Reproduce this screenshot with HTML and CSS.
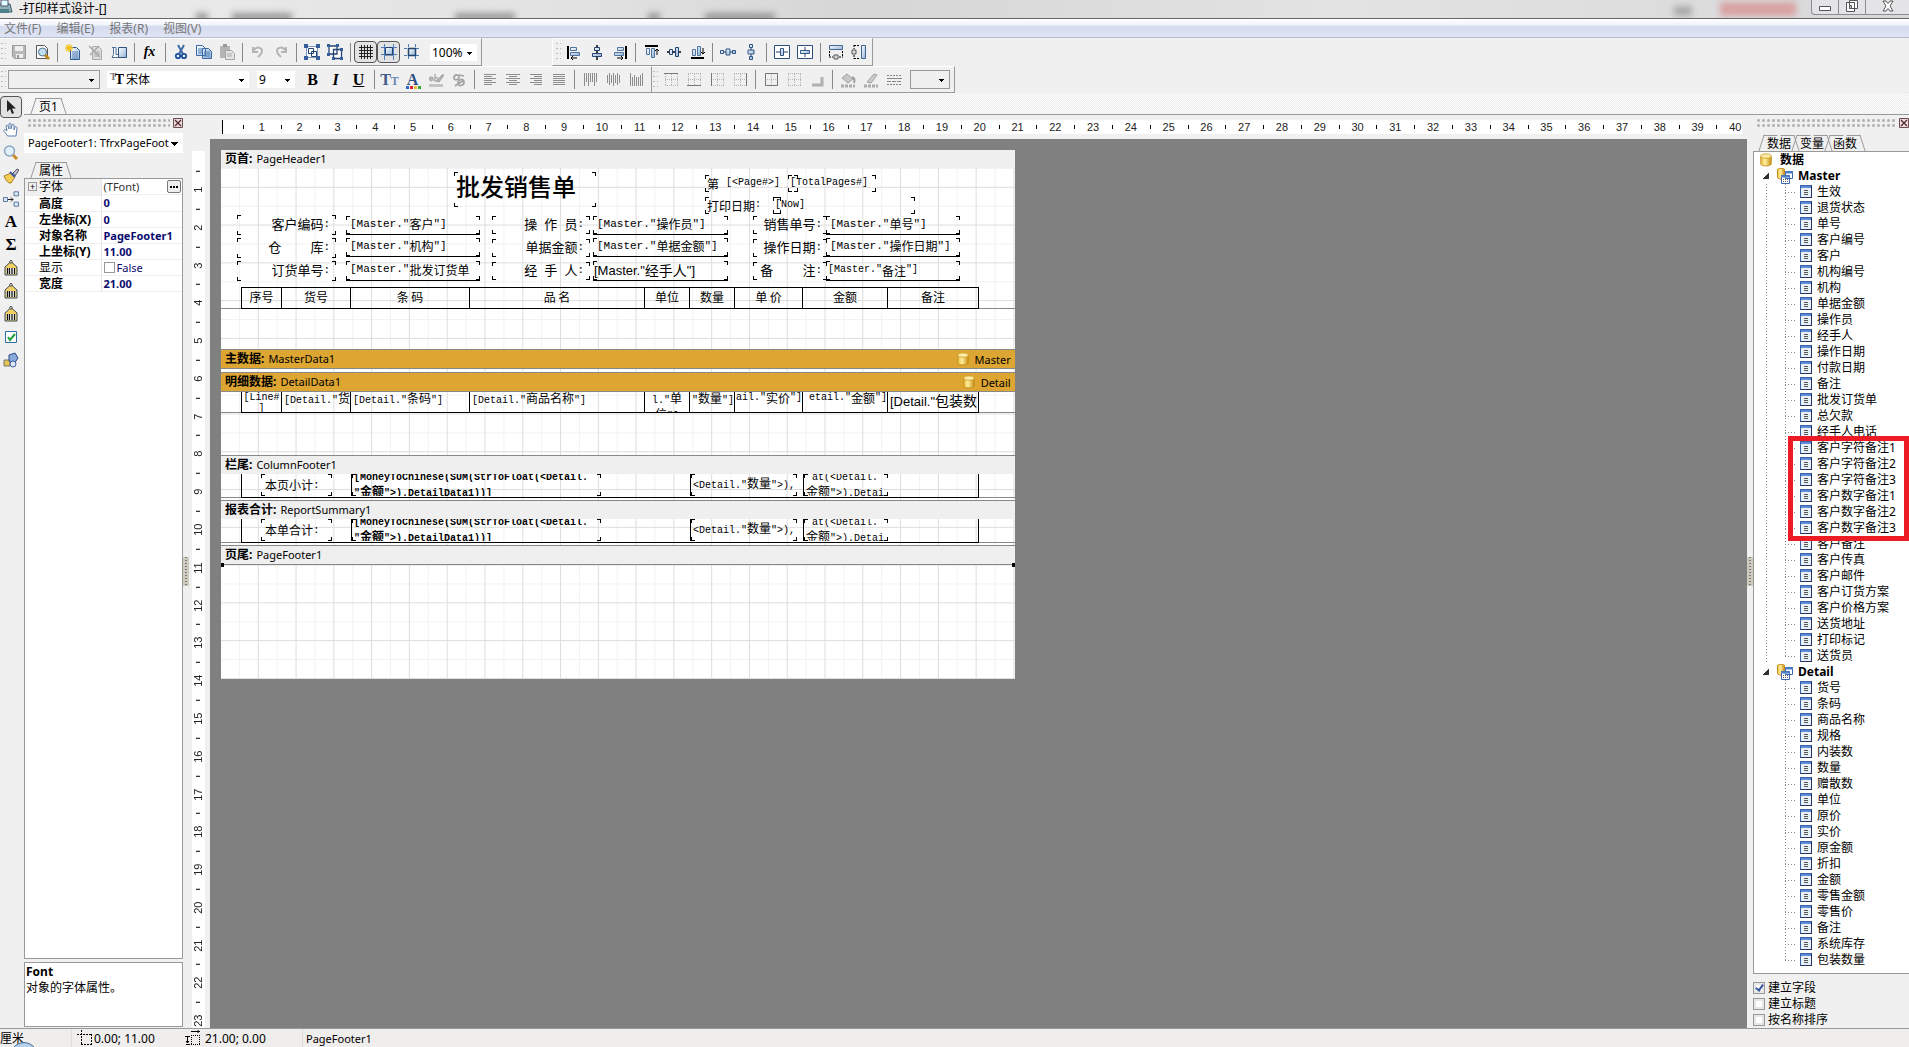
FILE: index.html
```html
<!DOCTYPE html>
<html lang="zh-CN">
<head>
<meta charset="utf-8">
<title>打印样式设计</title>
<link rel="stylesheet" href="styles.css">
</head>
<body>
<svg class="sprite" aria-hidden="true">
<defs>
<linearGradient id="blue" x1="0" y1="0" x2="1" y2="1"><stop offset="0" stop-color="#fff"/><stop offset="1" stop-color="#8fb2d8"/></linearGradient>
<linearGradient id="gold" x1="0" x2="1" y1="0" y2="0"><stop offset="0" stop-color="#e8b83a"/><stop offset=".4" stop-color="#fff0a0"/><stop offset="1" stop-color="#c98f14"/></linearGradient>
</defs>
<symbol id="save" viewBox="0 0 16 16"><path d="M1.500 1.500h13v13H3.500l-2-2z" fill="#b9b9b9" stroke="#999"/><path d="M4 2h8v5H4zM5 10h7v4H5z" fill="#eee"/><path d="M6 11h2v3H6z" fill="#999"/></symbol>
<symbol id="preview" viewBox="0 0 16 16"><path d="M2.500 1.500h8l3 3v10h-11z" fill="#fff" stroke="#555"/><circle cx="8.500" cy="8" r="4" fill="#bfe0f0" stroke="#56748c"/><path d="M11 11l4 4" stroke="#c08a20" stroke-width="3"/></symbol>
<symbol id="newpage" viewBox="0 0 16 16"><path d="M5.500 3.500h6l3 3v9h-9z" fill="url(#blue)" stroke="#2f5b93"/><path d="M7 8h6M7 10h6M7 12h6M7 14h6" stroke="#5c83b5"/><path d="M4 0v8M0 4h8M1 1l6 6M7 1L1 7" stroke="#f1c21c" stroke-width="1.300"/></symbol>
<symbol id="delpage" viewBox="0 0 16 16"><path d="M4.500 2.500h6l3 3v10h-9z" fill="#ddd" stroke="#aaa"/><path d="M6 8h6M6 10h6M6 12h6" stroke="#aaa"/><path d="M1 2l11 11M11 2L2 11" stroke="#aaa" stroke-width="1.500"/></symbol>
<symbol id="setpage" viewBox="0 0 16 16"><path d="M1 3.500h4v7h3v3H1l1.500-3V3.500z" fill="#fff" stroke="#51719a"/><path d="M7.500 3.500h8v10h-8z" fill="url(#blue)" stroke="#31507c"/></symbol>
<symbol id="cut" viewBox="0 0 16 16"><path d="M5 1l5 9M11 1L6 10" stroke="#3f6ba5" stroke-width="2"/><circle cx="5" cy="12" r="2.200" fill="none" stroke="#1c4fa0" stroke-width="1.800"/><circle cx="11" cy="12" r="2.200" fill="none" stroke="#1c4fa0" stroke-width="1.800"/></symbol>
<symbol id="copy" viewBox="0 0 16 16"><path d="M.5 1.500h6l3 3v7h-9zM6.500 4.500h6l3 3v7h-9z" fill="url(#blue)" stroke="#3a68a6"/><path d="M2 5h4M2 7h4M2 9h4M8 8h6M8 10h6M8 12h6" stroke="#4878b5"/></symbol>
<symbol id="paste" viewBox="0 0 16 16"><path d="M1 2h10v12H1z" fill="#b5b5b5"/><path d="M4 0h4v3H4z" fill="#999"/><path d="M6.500 6.500h6l3 3v6h-9z" fill="#e4e4e4" stroke="#a5a5a5"/><path d="M8 10h5M8 12h5" stroke="#aaa"/></symbol>
<symbol id="undo" viewBox="0 0 16 16"><path d="M3 3v5h5M3 7c3-5 9-4 9 0 0 3-2 4-4 6" fill="none" stroke="#b4b4b4" stroke-width="2"/></symbol>
<symbol id="redo" viewBox="0 0 16 16"><path d="M13 3v5H8M13 7c-3-5-9-4-9 0 0 3 2 4 4 6" fill="none" stroke="#b4b4b4" stroke-width="2"/></symbol>
<symbol id="group" viewBox="0 0 16 16"><path d="M2.500 2.500h11v11h-11z" fill="#f7faff" stroke="#7d97bd"/><path d="M4.500 4.500h5v5h-5zM7.500 7.500h5v5h-5z" fill="#fff" stroke="#24436e"/><path d="M0 0h4v4H0zM12 0h4v4h-4zM0 12h4v4H0zM12 12h4v4h-4z" fill="#345f9c"/></symbol>
<symbol id="ungroup" viewBox="0 0 16 16"><path d="M2 2h8v8H2zM6.500 5.500h8v9h-8z" fill="#fff" stroke="#24436e" stroke-width="1.300"/><path d="M0 0h3v3H0zM9 0h3v3H9zM0 9h3v3H0zM13 4h3v3h-3zM13 13h3v3h-3zM5 13h3v3H5z" fill="#345f9c"/></symbol>
<symbol id="grid" viewBox="0 0 16 16"><path d="M3.500 1v14M6.500 1v14M9.500 1v14M12.500 1v14M1 3.500h14M1 6.500h14M1 9.500h14M1 12.500h14" stroke="#222"/></symbol>
<symbol id="snap" viewBox="0 0 16 16"><path d="M3.500 0v16M12.500 0v16M0 3.500h16M0 10.500h16" stroke="#4d7cc0"/><path d="M4.500 3.500h7v7h-7z" fill="url(#blue)" stroke="#24436e"/><path d="M4 11h8" stroke="#24436e"/></symbol>
<symbol id="fit" viewBox="0 0 16 16"><path d="M4.500 0v16M11.500 0v16M0 4.500h16M0 11.500h16" stroke="#4d7cc0" stroke-dasharray="3 1"/><path d="M4.500 4.500h7v7h-7z" fill="url(#blue)" stroke="#24436e" stroke-width="1.500"/></symbol>
<symbol id="aleft" viewBox="0 0 16 16"><path d="M2 2v13" stroke="#000" stroke-width="2"/><path d="M4.500 3.500h6v3h-6zM4.500 8.500h9v3h-9z" fill="url(#blue)" stroke="#52749c"/><path d="M5 14h6M7 12l-2 2 2 2" stroke="#000" fill="none"/></symbol>
<symbol id="acenter" viewBox="0 0 16 16"><path d="M8 1v15" stroke="#000" stroke-width="1.500"/><path d="M5.500 3.500h5v3h-5zM3.500 9.500h9v3h-9z" fill="url(#blue)" stroke="#24436e"/></symbol>
<symbol id="aright" viewBox="0 0 16 16"><path d="M14 2v13" stroke="#000" stroke-width="2"/><path d="M5.500 3.500h6v3h-6zM2.500 8.500h9v3h-9z" fill="url(#blue)" stroke="#52749c"/><path d="M5 14h6M9 12l2 2-2 2" stroke="#000" fill="none"/></symbol>
<symbol id="atop" viewBox="0 0 16 16"><path d="M2 2h13" stroke="#000" stroke-width="2"/><path d="M3.500 4.500h3v6h-3zM8.500 4.500h3v9h-3z" fill="url(#blue)" stroke="#52749c"/><path d="M14 5v6M12 7l2-2 2 2" stroke="#000" fill="none"/></symbol>
<symbol id="amid" viewBox="0 0 16 16"><path d="M1 8h14" stroke="#000" stroke-width="1.500"/><path d="M3.500 5.500h3v5h-3zM9.500 3.500h3v9h-3z" fill="url(#blue)" stroke="#24436e"/></symbol>
<symbol id="abottom" viewBox="0 0 16 16"><path d="M2 14h13" stroke="#000" stroke-width="2"/><path d="M3.500 5.500h3v6h-3zM8.500 2.500h3v9h-3z" fill="url(#blue)" stroke="#52749c"/><path d="M14 4v6M12 8l2 2 2-2" stroke="#000" fill="none"/></symbol>
<symbol id="hspace" viewBox="0 0 16 16"><path d="M0 8h16" stroke="#24436e"/><path d="M.5 6.500h3v3h-3zM6 5h4v6H6zM12.500 6.500h3v3h-3z" fill="url(#blue)" stroke="#2f5483"/></symbol>
<symbol id="vspace" viewBox="0 0 16 16"><path d="M8 0v16" stroke="#24436e"/><path d="M6.500 .5h3v3h-3zM5 6h6v4H5zM6.500 12.500h3v3h-3z" fill="url(#blue)" stroke="#2f5483"/></symbol>
<symbol id="ch" viewBox="0 0 16 16"><path d="M.5 1.500h15v13H.5z" fill="#fff" stroke="#2f4f79"/><path d="M2 8h12" stroke="#24436e"/><path d="M6.500 4.500h3v7h-3z" fill="url(#blue)" stroke="#2f5483"/></symbol>
<symbol id="cv" viewBox="0 0 16 16"><path d="M.5 1.500h15v13H.5z" fill="#fff" stroke="#2f4f79"/><path d="M8 3v10" stroke="#24436e"/><path d="M3.500 6.500h9v3h-9z" fill="url(#blue)" stroke="#2f5483"/></symbol>
<symbol id="samew" viewBox="0 0 16 16"><path d="M1.500 1.500h13v4h-13z" fill="url(#blue)" stroke="#44658f"/><path d="M1.500 7v6M14.500 7v6M1 13h4M11 13h4" stroke="#000" stroke-dasharray="2 1"/><path d="M6 11h4v4H6z" fill="#ddd" stroke="#555"/></symbol>
<symbol id="sameh" viewBox="0 0 16 16"><path d="M10.500 1.500h4v13h-4z" fill="url(#blue)" stroke="#44658f"/><path d="M3 1.500h6M3 14.500h6M3 1v4M3 11v4" stroke="#000" stroke-dasharray="2 1"/><path d="M1 6h4v4H1z" fill="#ddd" stroke="#555"/></symbol>
<symbol id="marker" viewBox="0 0 16 16"><path d="M1 12h14v3H1z" fill="#c4c4c4"/><path d="M9 9l5-6h2l-5 7z" fill="#bbb" stroke="#999"/><path d="M2 8c-2-4 3-4 3-1v2M5 7c-3-1-4 2-1 2M7 2v7c4 1 4-5 0-3" fill="none" stroke="#aaa" stroke-width="1.400"/></symbol>
<symbol id="rotate" viewBox="0 0 16 16"><path d="M3 6c0-4 5-4 5-1S3 9 3 6M8 3l5 1M7 11c0-4 6-5 6-1s-6 5-6 1M13 8l-9 6" fill="none" stroke="#a2a2a2" stroke-width="1.700"/></symbol>
<symbol id="tl" viewBox="0 0 16 16"><path d="M2 2.500h12M2 4.500h8M2 6.500h12M2 8.500h8M2 10.500h12M2 12.500h8" stroke="#8d8d8d"/></symbol>
<symbol id="tc" viewBox="0 0 16 16"><path d="M1 2.500h14M4 4.500h8M1 6.500h14M4 8.500h8M1 10.500h14M4 12.500h8" stroke="#8d8d8d"/></symbol>
<symbol id="tr" viewBox="0 0 16 16"><path d="M2 2.500h12M6 4.500h8M2 6.500h12M6 8.500h8M2 10.500h12M6 12.500h8" stroke="#8d8d8d"/></symbol>
<symbol id="tj" viewBox="0 0 16 16"><path d="M2 2.500h12M2 4.500h12M2 6.500h12M2 8.500h12M2 10.500h12M2 12.500h12" stroke="#8d8d8d"/></symbol>
<symbol id="vt" viewBox="0 0 16 16"><path d="M2.500 1v13M4.500 1v9M6.500 1v13M8.500 1v9M10.500 1v9M12.500 1v13M14.500 1v9" stroke="#8d8d8d"/></symbol>
<symbol id="vm" viewBox="0 0 16 16"><path d="M2.500 3v8M4.500 1v12M6.500 3v8M8.500 1v13M10.500 3v8M12.500 1v12M14.500 3v8" stroke="#8d8d8d"/></symbol>
<symbol id="vb" viewBox="0 0 16 16"><path d="M2.500 1v13M4.500 5v9M6.500 3v11M8.500 5v9M10.500 5v9M12.500 3v11M14.500 1v13" stroke="#8d8d8d"/></symbol>
<symbol id="dots" viewBox="0 0 16 16"><path d="M2 1.500h13M2 7.500h13M2 13.500h13M2.500 2v12M8.500 2v12M14.500 2v12" stroke="#b5b5b5" stroke-dasharray="1 1"/></symbol>
<symbol id="ft" viewBox="0 0 16 16"><use href="#dots"/><path d="M1 1.500h14" stroke="#777"/></symbol>
<symbol id="fb" viewBox="0 0 16 16"><use href="#dots"/><path d="M1 13.500h14" stroke="#777"/></symbol>
<symbol id="fl" viewBox="0 0 16 16"><use href="#dots"/><path d="M2.500 1v13" stroke="#777"/></symbol>
<symbol id="fr" viewBox="0 0 16 16"><use href="#dots"/><path d="M14.500 1v13" stroke="#777"/></symbol>
<symbol id="fall" viewBox="0 0 16 16"><use href="#dots"/><path d="M2.500 1.500h12v12h-12z" fill="none" stroke="#777"/></symbol>
<symbol id="shadow" viewBox="0 0 16 16"><path d="M3 13h10V5" stroke="#b0b0b0" stroke-width="3" fill="none"/></symbol>
<symbol id="fill" viewBox="0 0 16 16"><path d="M2 6l5-4 6 5-5 4z" fill="#c8c8c8" stroke="#a0a0a0"/><path d="M12 5c3 1 3 3 2 6" stroke="#a0a0a0" stroke-width="2" fill="none"/><path d="M1 14h14" stroke="#aaa" stroke-width="3" stroke-dasharray="3 1"/></symbol>
<symbol id="pen" viewBox="0 0 16 16"><path d="M4 10l7-8 3 1-6 8z" fill="#ccc" stroke="#a0a0a0"/><path d="M1 14h14" stroke="#aaa" stroke-width="3" stroke-dasharray="3 1"/></symbol>
<symbol id="lines" viewBox="0 0 16 16"><path d="M1 3.500h15M1 12.500h15" stroke="#888" stroke-dasharray="2 1"/><path d="M1 6.500h15" stroke="#888"/><path d="M1 9.500h15" stroke="#888" stroke-dasharray="4 1"/></symbol>
<symbol id="colors" viewBox="0 0 16 16"><path d="M1 13h3v3H1z" fill="#36c"/><path d="M5 13h3v3H5z" fill="#d23"/><path d="M9 13h3v3H9z" fill="#eb3"/><path d="M13 13h3v3h-3z" fill="#3a3"/></symbol>
<symbol id="arrow" viewBox="0 0 16 16"><path d="M4 1v12l3-3 2 5 2-1-2-4.500h4z" fill="#222"/></symbol>
<symbol id="hand" viewBox="0 0 16 16"><path d="M4.500 14C3 11 0 9 1 8s2 0 3 1L3 4c0-1 2-1 2 0l1 3V2c0-1 2-1 2 0v5l1-4c0-1 2-1 2 0v5l1-3c1-1 2 0 2 1l-1 8z" fill="#fff" stroke="#5f7fae"/></symbol>
<symbol id="lens" viewBox="0 0 16 16"><path d="M10 10l4 4" stroke="#c98b28" stroke-width="3"/><circle cx="6.500" cy="6" r="5" fill="#dff0fa" stroke="#8aa3bb" stroke-width="1.400"/></symbol>
<symbol id="brush" viewBox="0 0 16 16"><path d="M10 5l4-4 2 1-4 6z" fill="#b9bfd0" stroke="#556"/><path d="M1 8l7-3 4 4-4 6H6l-3-3z" fill="#f4cd55" stroke="#a5812c"/><path d="M7 4l5 5" stroke="#3d5ba5" stroke-width="2"/></symbol>
<symbol id="conn" viewBox="0 0 16 16"><path d="M.5 6.500h4v4h-4zM11 .8h4.500v4H11zM11 11.200h4.500v4H11z" fill="#dce8f6" stroke="#5d7ba3"/><path d="M5 8.500h5M8 6.500l2 2-2 2" stroke="#222" fill="none"/></symbol>
<symbol id="bell" viewBox="0 0 16 16"><path d="M8 1.500l6 5.500v8H2V7z" fill="#f0cf63" stroke="#3a4a5e"/><path d="M3.500 8h9v6h-9z" fill="#fff"/><path d="M4.500 8v6M6.500 8v6M9 8v6M11.500 8v6" stroke="#111" stroke-width="1.300"/><circle cx="8" cy="1.800" r="1.300" fill="#fff" stroke="#444"/></symbol>
<symbol id="check" viewBox="0 0 16 16"><path d="M2.500 2.500h11v11h-11z" fill="#fff" stroke="#2d70a5"/><path d="M5 8l2 3 5-6" stroke="#25a13c" stroke-width="2" fill="none"/></symbol>
<symbol id="shapes" viewBox="0 0 16 16"><path d="M1 8h6v6H1z" fill="#e5c34f" stroke="#777"/><path d="M6 3l6-2 3 5-4 6-5-3z" fill="#8aa9d8" stroke="#2d4a88"/><circle cx="10" cy="12" r="3" fill="#dfe7f6" stroke="#3f5fa5"/></symbol>
<symbol id="db" viewBox="0 0 16 16"><path d="M2 3.500v9c0 3 12 3 12 0v-9" fill="url(#gold)" stroke="#c58d1c"/><ellipse cx="8" cy="3.500" rx="6" ry="2.500" fill="#fbe9a6" stroke="#d3a12c"/></symbol>
<symbol id="dbset" viewBox="0 0 16 16"><path d="M.5 1.500v8c0 2 7 2 7 0v-8c0-1.500-7-1.500-7 0z" fill="url(#gold)" stroke="#c58d1c"/><path d="M8.500 3.500h7v7h-7zM4.500 7.500h8v8h-8z" fill="#fff" stroke="#3d67ab"/><path d="M8 4.500h8M4 8.500h9" stroke="#4c7fd0" stroke-width="2"/><path d="M6 11.500h5M6 13.500h5" stroke="#555" stroke-dasharray="1 1"/></symbol>
<symbol id="closex" viewBox="0 0 10 10"><path d="M.5 .5h9v9h-9z" fill="#e9dede" stroke="#6f4a50"/><path d="M2 2l6 6M8 2L2 8" stroke="#5a2a33" stroke-width="1.400"/></symbol>
<symbol id="pos" viewBox="0 0 16 16"><path d="M0 4.500h14M4.500 0v14M14.500 4v10M4 14.500h11" stroke="#000" stroke-dasharray="2 1"/></symbol>
<symbol id="size" viewBox="0 0 16 16"><path d="M6 5.500h9M6.500 5v10M14.500 5v10M6 14.500h9" stroke="#000" stroke-dasharray="1 1"/><path d="M6 1.500h9M13 0v3M1 14.500h4M2.500 6v7M0 6.500h5M1 11l1.500 2L4 11" stroke="#000" fill="none"/></symbol>
</svg>

<header class="titlebar">
  <i class="haze haze-a"></i><i class="haze haze-b"></i><i class="haze haze-c"></i><i class="haze haze-d"></i><i class="haze haze-e"></i><i class="haze haze-f"></i><i class="haze haze-red"></i>
  <svg class="app-icon" viewBox="0 0 16 16"><path d="M1 4h12l2 8H1z" fill="#8fb0b4" stroke="#3d5a66"/><path d="M4 0h7v6H4z" fill="#dff" stroke="#557"/><path d="M2 9h10v4H2z" fill="#4c7f8a"/></svg>
  <h1>-打印样式设计-[]</h1>
  <div class="winbuttons">
    <button type="button" aria-label="最小化"><svg viewBox="0 0 12 12"><path d="M.5 6.500h11v4H.5z" fill="#fff" stroke="#555"/></svg></button>
    <button type="button" aria-label="还原"><svg viewBox="0 0 12 12"><path d="M3.500.5h8v8h-8zM.5 2.500h8v9h-8z" fill="#fff" stroke="#555"/><path d="M3.500 5.500h2v3h-2z" fill="#ccc" stroke="#555"/></svg></button>
    <button type="button" class="wide" aria-label="关闭"><svg viewBox="0 0 12 12"><path d="M1 1h3l2 2.500L8 1h3L8 6l3 5H8L6 8.500 4 11H1l3-5z" fill="#fff" stroke="#555"/></svg></button>
  </div>
</header>
<nav class="menubar">
  <button type="button">文件(F)</button><button type="button">编辑(E)</button><button type="button">报表(R)</button><button type="button">视图(V)</button>
</nav>
<div class="toolrow">
  <div class="toolbar">
    <i class="grip"></i>
    <button type="button" aria-label="保存"><svg><use href="#save"/></svg></button>
    <button type="button" aria-label="预览"><svg><use href="#preview"/></svg></button><i class="sep"></i>
    <button type="button" aria-label="新建页"><svg><use href="#newpage"/></svg></button>
    <button type="button" aria-label="删除页"><svg><use href="#delpage"/></svg></button>
    <button type="button" aria-label="页面设置"><svg><use href="#setpage"/></svg></button><i class="sep"></i>
    <button type="button" class="glyph fx">fx</button><i class="sep"></i>
    <button type="button" aria-label="剪切"><svg><use href="#cut"/></svg></button>
    <button type="button" aria-label="复制"><svg><use href="#copy"/></svg></button>
    <button type="button" aria-label="粘贴"><svg><use href="#paste"/></svg></button><i class="sep"></i>
    <button type="button" aria-label="撤消"><svg><use href="#undo"/></svg></button>
    <button type="button" aria-label="重做"><svg><use href="#redo"/></svg></button><i class="sep"></i>
    <button type="button" aria-label="组合"><svg><use href="#group"/></svg></button>
    <button type="button" aria-label="取消组合"><svg><use href="#ungroup"/></svg></button><i class="sep"></i>
    <button type="button" class="on" aria-label="网格"><svg><use href="#grid"/></svg></button>
    <button type="button" class="on" aria-label="对齐网格"><svg><use href="#snap"/></svg></button>
    <button type="button" aria-label="适应网格"><svg><use href="#fit"/></svg></button>
    <select class="combo zoom" aria-label="缩放"><option>100%</option></select>
  </div>
  <div class="toolbar second">
    <i class="grip"></i>
    <button type="button" aria-label="左对齐"><svg><use href="#aleft"/></svg></button>
    <button type="button" aria-label="水平居中"><svg><use href="#acenter"/></svg></button>
    <button type="button" aria-label="右对齐"><svg><use href="#aright"/></svg></button><i class="sep"></i>
    <button type="button" aria-label="顶对齐"><svg><use href="#atop"/></svg></button>
    <button type="button" aria-label="垂直居中"><svg><use href="#amid"/></svg></button>
    <button type="button" aria-label="底对齐"><svg><use href="#abottom"/></svg></button><i class="sep"></i>
    <button type="button" aria-label="水平等距"><svg><use href="#hspace"/></svg></button>
    <button type="button" aria-label="垂直等距"><svg><use href="#vspace"/></svg></button><i class="sep"></i>
    <button type="button" aria-label="区域内水平居中"><svg><use href="#ch"/></svg></button>
    <button type="button" aria-label="区域内垂直居中"><svg><use href="#cv"/></svg></button><i class="sep"></i>
    <button type="button" aria-label="等宽"><svg><use href="#samew"/></svg></button>
    <button type="button" aria-label="等高"><svg><use href="#sameh"/></svg></button>
  </div>
</div>
<div class="toolrow">
  <div class="toolbar">
    <i class="grip"></i>
    <select class="combo style" aria-label="样式" disabled><option></option></select>
    <label class="fontbox"><span class="tt"><i>T</i>T</span><select class="combo font" aria-label="字体"><option>宋体</option></select></label>
    <select class="combo size" aria-label="字号"><option>9</option></select>
    <button type="button" class="glyph">B</button>
    <button type="button" class="glyph it">I</button>
    <button type="button" class="glyph ul">U</button><i class="sep"></i>
    <button type="button" class="glyph blue">T<small>T</small></button>
    <button type="button" class="glyph color">A<svg><use href="#colors"/></svg></button>
    <button type="button" aria-label="突出显示"><svg><use href="#marker"/></svg></button>
    <button type="button" aria-label="旋转"><svg><use href="#rotate"/></svg></button><i class="sep"></i>
    <button type="button" aria-label="文字左对齐"><svg><use href="#tl"/></svg></button>
    <button type="button" aria-label="文字居中"><svg><use href="#tc"/></svg></button>
    <button type="button" aria-label="文字右对齐"><svg><use href="#tr"/></svg></button>
    <button type="button" aria-label="两端对齐"><svg><use href="#tj"/></svg></button><i class="sep"></i>
    <button type="button" aria-label="文字靠上"><svg><use href="#vt"/></svg></button>
    <button type="button" aria-label="文字居中(垂直)"><svg><use href="#vm"/></svg></button>
    <button type="button" aria-label="文字靠下"><svg><use href="#vb"/></svg></button>
  </div>
  <div class="toolbar">
    <i class="grip"></i>
    <button type="button" aria-label="上框线"><svg><use href="#ft"/></svg></button>
    <button type="button" aria-label="下框线"><svg><use href="#fb"/></svg></button>
    <button type="button" aria-label="左框线"><svg><use href="#fl"/></svg></button>
    <button type="button" aria-label="右框线"><svg><use href="#fr"/></svg></button><i class="sep"></i>
    <button type="button" aria-label="全部框线"><svg><use href="#fall"/></svg></button>
    <button type="button" aria-label="无框线"><svg><use href="#dots"/></svg></button>
    <button type="button" aria-label="阴影"><svg><use href="#shadow"/></svg></button><i class="sep"></i>
    <button type="button" aria-label="填充色"><svg><use href="#fill"/></svg></button>
    <button type="button" aria-label="线条色"><svg><use href="#pen"/></svg></button>
    <button type="button" aria-label="线型"><svg><use href="#lines"/></svg></button>
    <select class="combo width" aria-label="线宽" disabled><option></option></select>
  </div>
</div>

<main>
  <div class="objects">
    <button type="button" class="on" aria-label="选择"><svg><use href="#arrow"/></svg></button>
    <button type="button" aria-label="抓手"><svg><use href="#hand"/></svg></button>
    <button type="button" aria-label="放大"><svg><use href="#lens"/></svg></button>
    <button type="button" aria-label="格式刷"><svg><use href="#brush"/></svg></button>
    <button type="button" aria-label="插入带区"><svg><use href="#conn"/></svg></button>
    <button type="button" class="glyph">A</button>
    <button type="button" class="glyph">Σ</button>
    <button type="button" aria-label="条形码"><svg><use href="#bell"/></svg></button>
    <button type="button" aria-label="条形码 2"><svg><use href="#bell"/></svg></button>
    <button type="button" aria-label="条形码 3"><svg><use href="#bell"/></svg></button>
    <button type="button" aria-label="复选框"><svg><use href="#check"/></svg></button>
    <button type="button" aria-label="图形"><svg><use href="#shapes"/></svg></button>
  </div>
  <div class="desk">
    <div class="pagetabs"><button type="button" class="tab">页1</button></div>
    <div class="work">
      <aside class="inspector">
        <div class="dock"><i></i><button type="button" aria-label="关闭"><svg><use href="#closex"/></svg></button></div>
        <select class="combo object" aria-label="对象"><option>PageFooter1: TfrxPageFoot</option></select>
        <div class="tabs"><button type="button" class="tab">属性</button></div>
        <div class="props">
          <table>
            <tr class="cur"><th scope="row"><span class="plus">+</span>字体</th><td>(TFont)<button type="button" class="dotsbtn" aria-label="编辑字体"><svg viewBox="0 0 8 2"><path d="M0 0h2v2H0zM3 0h2v2H3zM6 0h2v2H6z"/></svg></button></td></tr>
            <tr><th scope="row">高度</th><td>0</td></tr>
            <tr><th scope="row">左坐标(X)</th><td>0</td></tr>
            <tr><th scope="row">对象名称</th><td>PageFooter1</td></tr>
            <tr><th scope="row">上坐标(Y)</th><td>11.00</td></tr>
            <tr class="plain"><th scope="row">显示</th><td><label><input type="checkbox">False</label></td></tr>
            <tr><th scope="row">宽度</th><td>21.00</td></tr>
          </table>
        </div>
        <div class="help"><b>Font</b><p>对象的字体属性。</p></div>
      </aside>
      <div class="split left"><i></i></div>
      <section class="designer">
        <ol class="ruler hor"><li>1<li>2<li>3<li>4<li>5<li>6<li>7<li>8<li>9<li>10<li>11<li>12<li>13<li>14<li>15<li>16<li>17<li>18<li>19<li>20<li>21<li>22<li>23<li>24<li>25<li>26<li>27<li>28<li>29<li>30<li>31<li>32<li>33<li>34<li>35<li>36<li>37<li>38<li>39<li>40</ol>
        <div class="lower">
          <ol class="ruler ver"><li>1<li>2<li>3<li>4<li>5<li>6<li>7<li>8<li>9<li>10<li>11<li>12<li>13<li>14<li>15<li>16<li>17<li>18<li>19<li>20<li>21<li>22<li>23</ol>
          <div class="canvas">
            <div class="page">
              <section class="band header">
                <h2><b>页首:</b> PageHeader1</h2>
                <div class="body">
                  <span class="memo title" style="left:233px;top:4px;width:142px;height:35px">批发销售单</span>
                  <span class="memo small" style="left:484px;top:7px;width:93px;height:17px"><em>第</em><i class="half"></i>[&lt;Page#&gt;]</span>
                  <span class="memo small" style="left:567px;top:7px;width:88px;height:17px">[TotalPages#]</span>
                  <span class="memo small" style="left:484px;top:29px;width:76px;height:17px"><em>打印日期</em>:</span>
                  <span class="memo small" style="left:552px;top:29px;width:142px;height:17px">[Now]</span>

                  <span class="memo label" style="left:16px;top:47px;width:99px;height:20px"><em>客户编码</em>:</span>
                  <span class="memo line" style="left:125px;top:48px;width:134px;height:19px">[Master."<em>客户</em>"]</span>
                  <span class="memo label" style="left:271px;top:48px;width:98px;height:18px"><em>操</em><i class="half"></i><em>作</em><i class="half"></i><em>员</em>:</span>
                  <span class="memo line" style="left:372px;top:48px;width:135px;height:19px">[Master."<em>操作员</em>"]</span>
                  <span class="memo label near" style="left:532px;top:48px;width:74px;height:18px"><em>销售单号</em>:</span>
                  <span class="memo line" style="left:605px;top:48px;width:134px;height:19px">[Master."<em>单号</em>"]</span>

                  <span class="memo label" style="left:16px;top:70px;width:99px;height:20px"><em>仓</em><i class="quad"></i><em>库</em>:</span>
                  <span class="memo line" style="left:125px;top:70px;width:134px;height:19px">[Master."<em>机构</em>"]</span>
                  <span class="memo label" style="left:271px;top:71px;width:98px;height:18px"><em>单据金额</em>:</span>
                  <span class="memo line" style="left:372px;top:70px;width:135px;height:19px">[Master."<em>单据金额</em>"]</span>
                  <span class="memo label near" style="left:532px;top:71px;width:74px;height:18px"><em>操作日期</em>:</span>
                  <span class="memo line" style="left:605px;top:70px;width:134px;height:19px">[Master."<em>操作日期</em>"]</span>

                  <span class="memo label" style="left:16px;top:93px;width:99px;height:20px"><em>订货单号</em>:</span>
                  <span class="memo line" style="left:125px;top:93px;width:134px;height:20px">[Master."<em>批发订货单</em></span>
                  <span class="memo label" style="left:271px;top:94px;width:98px;height:18px"><em>经</em><i class="half"></i><em>手</em><i class="half"></i><em>人</em>:</span>
                  <span class="memo line arial" style="left:372px;top:93px;width:135px;height:20px">[Master."<em>经手人</em>"]</span>
                  <span class="memo label near" style="left:532px;top:94px;width:74px;height:18px"><em>备</em><i class="quad"></i><em>注</em>:</span>
                  <span class="memo line small" style="left:605px;top:93px;width:134px;height:20px">[Master."<em>备注</em>"]</span>

                  <div class="cells heads"><span>序号</span><span>货号</span><span>条 码</span><span>品 名</span><span>单位</span><span>数量</span><span>单 价</span><span>金额</span><span>备注</span></div>
                </div>
              </section>
              <section class="band master data"><h2><b>主数据:</b> MasterData1<span class="src"><svg><use href="#db"/></svg>Master</span></h2></section>
              <section class="band detail data">
                <h2><b>明细数据:</b> DetailData1<span class="src"><svg><use href="#db"/></svg>Detail</span></h2>
                <div class="body">
                  <div class="cells"><span class="mid wrap">[Line#<br>]</span><span>[Detail."<em>货</em></span><span>[Detail."<em>条码</em>"]</span><span>[Detail."<em>商品名称</em>"]</span><span class="mid low">l."<em>单</em><br><em>位</em>"]</span><span>"<em>数量</em>"]</span><span class="end">ail."<em>实价</em>"]</span><span class="end">etail."<em>金额</em>"]</span><span class="arial">[Detail."<em>包装数</em><br><em>量</em>"]</span></div>
                </div>
              </section>
              <section class="band total column">
                <h2><b>栏尾:</b> ColumnFooter1</h2>
                <div class="body"><div class="frame">
                  <span class="memo sub" style="left:19px;top:0px;width:71px;height:22px"><em>本页小计</em>:</span>
                  <span class="memo bar bold" style="left:109px;top:0px;width:250px;height:22px"><span>[MoneyToChinese(SUM(StrToFloat(&lt;Detail.<br>"<em>金额</em>"&gt;).DetailData1))]</span></span>
                  <span class="memo bar qty" style="left:448px;top:0px;width:107px;height:22px">&lt;Detail."<em>数量</em>"&gt;),<br>DetailData1)]</span>
                  <span class="memo bar two" style="left:561px;top:0px;width:85px;height:22px"><span>&nbsp;at(&lt;Detail.<br><em>金额</em>"&gt;).Detai</span></span>
                </div></div>
              </section>
              <section class="band total">
                <h2><b>报表合计:</b> ReportSummary1</h2>
                <div class="body"><div class="frame">
                  <span class="memo sub" style="left:19px;top:0px;width:71px;height:22px"><em>本单合计</em>:</span>
                  <span class="memo bar bold" style="left:109px;top:0px;width:250px;height:22px"><span>[MoneyToChinese(SUM(StrToFloat(&lt;Detail.<br>"<em>金额</em>"&gt;).DetailData1))]</span></span>
                  <span class="memo bar qty" style="left:448px;top:0px;width:107px;height:22px">&lt;Detail."<em>数量</em>"&gt;),<br>DetailData1)]</span>
                  <span class="memo bar two" style="left:561px;top:0px;width:85px;height:22px"><span>&nbsp;at(&lt;Detail.<br><em>金额</em>"&gt;).Detai</span></span>
                </div></div>
              </section>
              <section class="band footer"><h2><b>页尾:</b> PageFooter1</h2></section>
            </div>
          </div>
        </div>
      </section>
      <div class="split right"><i></i></div>
      <aside class="datapane">
        <div class="dock"><i></i><button type="button" aria-label="关闭"><svg><use href="#closex"/></svg></button></div>
        <div class="tabs three"><button type="button" class="tab">数据</button><button type="button" class="tab">变量</button><button type="button" class="tab">函数</button></div>
        <div class="tree">
          <div class="root"><svg><use href="#db"/></svg>数据</div>
          <div class="node"><i class="open"></i><svg><use href="#dbset"/></svg>Master</div>
          <ul class="trunk">
            <li>生效<li>退货状态<li>单号<li>客户编号<li>客户<li>机构编号<li>机构<li>单据金额<li>操作员<li>经手人<li>操作日期<li>付款日期<li>备注<li>批发订货单<li>总欠款<li>经手人电话
            <li class="marked">客户字符备注1<li>客户字符备注2<li>客户字符备注3<li>客户数字备注1<li>客户数字备注2<li>客户数字备注3
            <li>客户备注<li>客户传真<li>客户邮件<li>客户订货方案<li>客户价格方案<li>送货地址<li>打印标记<li>送货员
          </ul>
          <div class="node"><i class="open"></i><svg><use href="#dbset"/></svg>Detail</div>
          <ul>
            <li>货号<li>条码<li>商品名称<li>规格<li>内装数<li>数量<li>赠散数<li>单位<li>原价<li>实价<li>原金额<li>折扣<li>金额<li>零售金额<li>零售价<li>备注<li>系统库存<li>包装数量
          </ul>
        </div>
        <div class="options">
          <label><input type="checkbox" checked>建立字段</label>
          <label><input type="checkbox">建立标题</label>
          <label><input type="checkbox">按名称排序</label>
        </div>
      </aside>
    </div>
  </div>
</main>
<footer class="status">
  <span class="unit">厘米<i class="orb"></i></span>
  <span class="coord"><svg><use href="#pos"/></svg>0.00; 11.00</span>
  <span class="coord ext"><svg><use href="#size"/></svg>21.00; 0.00</span>
  <span class="name">PageFooter1</span>
</footer>
</body>
</html>
```
FILE: styles.css
```css
*, *::before, *::after { box-sizing: border-box; }
html, body { height: 100%; margin: 0; }
body {
  display: flex; flex-direction: column; overflow: hidden;
  background: #f0f0f0; color: #000;
  font: 12px/16px "Noto Sans", "Noto Sans CJK SC", sans-serif;
}
button, select, input { font: inherit; color: inherit; margin: 0; }
button { padding: 0; border: 0; background: none; }
h1, h2, p, ol, ul { margin: 0; padding: 0; font: inherit; list-style: none; }
svg { width: 16px; height: 16px; flex: none; display: block; }
.sprite { position: absolute; width: 0; height: 0; }

/* title bar */
.titlebar {
  position: relative; flex: none; height: 19px; display: flex; overflow: hidden;
  border-bottom: 1px solid #666; padding-left: 19px;
  background: linear-gradient(90deg, #ececec, #e2e2e2 30%, #d6d6d7 45%, #e3e3e4 70%, #d8d8da);
}
.titlebar h1 { position: relative; line-height: 17px; }
.app-icon { position: absolute; left: -3px; top: 0; }
.haze { position: absolute; top: 13px; height: 8px; width: 60px; background: #999; filter: blur(3px); }
.haze-a { left: 232px; } .haze-b { left: 455px; } .haze-c { left: 705px; width: 70px; }
.haze-d { left: 196px; width: 12px; } .haze-e { left: 648px; width: 12px; }
.haze-f { left: 1674px; top: 6px; width: 18px; height: 10px; background: #aaa; }
.haze-red { left: 1720px; top: 2px; width: 76px; height: 14px; background: #d9a2a2; }
.winbuttons {
  position: relative; margin-left: auto; width: 98px; height: 15px; display: flex;
  border: 1px solid #8b8d93; border-top: 0; border-right: 0; border-bottom-left-radius: 4px; background: #e4e4e6;
}
.winbuttons button { width: 27px; display: flex; justify-content: center; border-right: 1px solid #8b8d93; }
.winbuttons .wide { width: 43px; border: 0; }
.winbuttons svg { width: 12px; height: 12px; }

/* menu */
.menubar {
  flex: none; height: 19px; display: flex; gap: 15px; padding-left: 4px;
  background: linear-gradient(#fff, #eef2fa 35%, #d5dbee 40%, #dfe5f6); border-bottom: 1px solid #b4bbcb;
}
.menubar button { color: #777; line-height: 20px; height: 18px; }

/* toolbars */
.toolrow { flex: none; display: flex; height: 28px; }
.toolrow + .toolrow { height: 27px; }
.toolbar {
  display: flex; align-items: center; padding-right: 4px;
  border-top: 1px solid #fff; border-right: 1px solid #999; border-bottom: 1px solid #999;
}
.second { margin-left: 70px; border-left: 1px solid #fff; padding-right: 2px; }
.grip { width: 6px; height: 22px; flex: none; background: radial-gradient(circle, #bbb 1px, transparent 1px) 0 0 / 4px 5px; }
.toolbar .grip + button { margin-left: 1px; }
.second .grip { margin-left: 2px; }
.sep { width: 8px; height: 19px; flex: none; background: linear-gradient(#888, #888) 4px 0 / 1px 100% no-repeat; }
.toolbar button, .objects button { width: 23px; height: 22px; flex: none; display: flex; align-items: center; justify-content: center; }
.toolbar .on, .objects .on { border: 1px solid #555; border-radius: 4px; background: #e2e2e2; }
.glyph { font: bold 16px/20px "Liberation Serif", serif; }
.glyph.it, .glyph.fx { font-style: italic; }
.glyph.fx { font-size: 14px; }
.glyph.ul { text-decoration: underline; }
.glyph.blue { color: #3d5c8a; }
.glyph.blue small { font-size: 12px; color: #6d8ab5; align-self: flex-end; }
.glyph.color { position: relative; color: #2d4f86; }
.glyph.color svg { position: absolute; left: 4px; top: 4px; }
.combo {
  appearance: none; border: 0; border-radius: 0; padding: 0 14px 0 2px; height: 17px; line-height: 17px; outline: 0;
  background:
    linear-gradient(#000, #000) right 7px top 8px / 1px 3px no-repeat,
    linear-gradient(#000, #000) right 6px top 8px / 3px 2px no-repeat,
    linear-gradient(#000, #000) right 5px top 8px / 5px 1px no-repeat, #fff;
}
.combo:disabled { height: 19px; background-color: transparent; border: 1px solid #999; opacity: 1; }
.zoom { width: 47px; margin-left: 7px; }
.style { width: 92px; margin-left: 2px; }
.fontbox { display: flex; align-items: center; width: 142px; height: 17px; margin: 0 8px 0 7px; background: #fff; }
.fontbox .combo { flex: 1; }
.tt { font: bold 14px/16px "Liberation Serif", serif; padding-left: 3px; display: flex; }
.tt i { font-style: normal; font-size: 10px; line-height: 10px; color: #777; margin-right: -2px; }
.toolbar .size { width: 38px; margin-right: 6px; }
.toolbar .width { width: 40px; margin-left: 5px; }

/* workspace */
main { flex: 1; min-height: 0; display: flex; }
.objects { width: 24px; flex: none; padding-top: 3px; }
.objects button { margin-bottom: 1px; width: 22px; }
.objects .glyph { font-size: 17px; }
.desk { flex: 1; min-width: 0; display: flex; flex-direction: column; }
.pagetabs {
  flex: none; height: 22px; display: flex; align-items: flex-end; padding-left: 10px; border-bottom: 1px solid #999;
  background: repeating-conic-gradient(#fbfbfb 0 25%, #eee 0 50%) 0 0 / 2px 2px;
}
.tab { position: relative; height: 16px; padding: 0 5px; line-height: 18px; }
.tab::before, .tab::after { content: ""; position: absolute; top: 0; bottom: 0; width: 60%; border-top: 1px solid #999; }
.tab::before { left: -1px; border-left: 1px solid #999; transform: skewX(-18deg); }
.tab::after { right: -1px; border-right: 1px solid #999; transform: skewX(18deg); }
.work { flex: 1; min-height: 0; display: flex; }

.dock { flex: none; height: 10px; margin: 3px 0 0 3px; display: flex; gap: 3px; }
.dock i { flex: 1; background: radial-gradient(circle, #b5b5b5 1px, transparent 2px) 0 0 / 5px 5px; }
.dock svg { width: 10px; height: 10px; }
.inspector { width: 159px; flex: none; display: flex; flex-direction: column; }
.object {
  flex: none; width: 100%; height: 20px; margin-top: 5px; padding: 0 12px 0 4px; line-height: 20px; font-size: 11px;
  background:
    linear-gradient(#000, #000) right 8px top 9px / 1px 4px no-repeat,
    linear-gradient(#000, #000) right 7px top 9px / 3px 3px no-repeat,
    linear-gradient(#000, #000) right 6px top 9px / 5px 2px no-repeat,
    linear-gradient(#000, #000) right 5px top 9px / 7px 1px no-repeat, #fff;
}
.tabs { display: flex; margin-top: 9px; padding-left: 10px; flex: none; }
.props { flex: 1; border: 1px solid #999; background: #fff; }
.props table { width: 100%; border-collapse: collapse; table-layout: fixed; }
.props th, .props td { height: 16px; padding: 0; line-height: 15px; border-bottom: 1px solid #eee; text-align: left; white-space: nowrap; }
.props th { position: relative; width: 76px; padding-left: 14px; border-right: 1px solid #e5e5e5; }
.props td { padding-left: 2px; color: #0b0b6e; font-weight: bold; font-size: 11px; }
.props .cur th, .props .cur td, .props .plain th, .props .plain td { font-weight: normal; }
.props .cur th { background: #f0f0f0; }
.props .cur td { color: #333; display: flex; justify-content: space-between; }
.plus { position: absolute; left: 3px; top: 3px; width: 9px; height: 9px; border: 1px solid #999; font-size: 9px; line-height: 7px; text-align: center; }
.dotsbtn { width: 14px; height: 13px; margin: 1px; border: 1px solid #777; border-radius: 2px; background: #eee; display: flex; align-items: center; justify-content: center; }
.dotsbtn svg { width: 8px; height: 2px; }
.props label { display: flex; align-items: center; gap: 2px; }
input[type=checkbox] { appearance: none; position: relative; width: 12px; height: 12px; flex: none; border: 1px solid #999; background: #fff; }
.props input[type=checkbox] { width: 11px; height: 11px; }
.help { flex: none; height: 65px; margin: 3px 0 1px; padding: 1px; border: 1px solid #999; background: #fff; }

.split { flex: none; display: flex; align-items: center; }
.split.left { width: 9px; } .split.right { width: 6px; }
.split i { width: 6px; height: 29px; background: radial-gradient(circle, #777 1px, transparent 1px) 1px 5px / 4px 3px repeat-y #cfccbf; }

.designer { flex: 1; min-width: 0; display: flex; flex-direction: column; }
.ruler { background: #fff; overflow: hidden; display: flex; font: 11px/14px "Liberation Sans", "Noto Sans CJK SC", sans-serif; color: #222; }
.ruler li { flex: none; text-align: center; }
.hor { flex: none; height: 14px; margin: 5px 5px 5px 30px; padding-left: 20px; border-left: 1px solid #000; }
.hor li { width: 1cm; background: linear-gradient(#000, #000) 0 50% / 1px 4px no-repeat; }
.lower { flex: 1; min-height: 0; display: flex; }
.ver { flex: none; flex-direction: column; width: 13px; margin: 12px 5px 0 0; padding-top: 20px; }
.ver li { height: 1cm; width: 13px; line-height: 13px; writing-mode: vertical-rl; text-orientation: sideways; transform: rotate(180deg); background: linear-gradient(#000, #000) 50% 100% / 4px 1px no-repeat; }
.canvas { flex: 1; min-width: 0; overflow: hidden; background: #808080; padding: 11px; }

/* report page */
.page {
  position: relative; width: 21cm; height: 529px; background-color: #fff;
  background-image:
    linear-gradient(90deg, transparent calc(100% - 1px), #ddd 0), linear-gradient(transparent calc(100% - 1px), #ddd 0),
    linear-gradient(90deg, transparent calc(50% - 1px), #f2f2f2 0, #f2f2f2 50%, transparent 0), linear-gradient(transparent calc(50% - 1px), #f2f2f2 0, #f2f2f2 50%, transparent 0);
  background-size: 1cm 1cm;
}
.band h2 { display: flex; gap: 4px; height: 18px; padding: 0 4px; line-height: 17px; background: #efefef; font-size: 11px; }
.band h2 b { font-size: 12px; }
.band .src { margin-left: auto; display: flex; gap: 5px; align-items: center; }
.band .src svg { width: 14px; height: 14px; }
.band .body { position: relative; }
.band + .band h2 { height: 20px; border: 1px solid #888; border-width: 1px 0; }
.header .body { height: 141px; border-bottom: 1px solid #888; }
.master { margin-top: 40px; }
.data h2 { background: #dda531; }
.detail { margin-top: 3px; }
.detail .body { height: 21px; border-bottom: 1px solid #888; }
.column { margin-top: 42px; }
.band + .total h2 { height: 19px; border-bottom: 0; }
.total .body { height: 24px; border-bottom: 1px solid #888; }
.total + .total, .footer { margin-top: 2px; }
.footer { position: relative; }
.footer::before, .footer::after { content: ""; position: absolute; bottom: -2px; width: 3px; height: 4px; background: #000; }
.footer::before { left: 0; } .footer::after { right: 0; }

.memo, .cells { font: 11px/14px "Liberation Mono", "Noto Sans CJK SC", monospace; }
.memo em, .cells em { font: 12px/13px "Noto Sans CJK SC", sans-serif; }
.memo {
  position: absolute; display: flex; align-items: center; overflow: hidden; white-space: pre; padding: 0 0 3px 4px;
  --k: linear-gradient(#000, #000);
  background: var(--k) 0 0 / 4px 1px, var(--k) 0 0 / 1px 4px, var(--k) 100% 0 / 4px 1px, var(--k) 100% 0 / 1px 4px,
    var(--k) 0 100% / 4px 1px, var(--k) 0 100% / 1px 4px, var(--k) 100% 100% / 4px 1px, var(--k) 100% 100% / 1px 4px;
  background-repeat: no-repeat;
}
.title { font: 500 24px/27px "Noto Sans CJK SC", sans-serif; padding: 0 0 8px 2px; }
.small { font-size: 10px; padding-left: 2px; padding-bottom: 1px; }
.label { justify-content: flex-end; padding-right: 6px; }
.label em { font-size: 13px; }
.label.near { padding-right: 5px; }
.sub { padding-bottom: 1px; }
.line { border-bottom: 1px solid #000; }
.arial { font: 13px/16px "Liberation Sans", "Noto Sans CJK SC", sans-serif; }
.memo.arial { padding-left: 1px; padding-bottom: 0; }
.arial em { font-size: 14px; }
.quad { width: 29px; }
.half { width: 7px; }
.cells {
  position: absolute; left: 20px; top: 0; height: 21px; display: grid; font-size: 10px; line-height: 12px;
  grid-template-columns: 40px 69px 119px 175px 45px 45px 68px 85px 91px; border-left: 1px solid #000; border-bottom: 1px solid #000;
}
.cells em { line-height: 12px; }
.cells span { border-right: 1px solid #000; overflow: hidden; white-space: pre; padding-left: 2px; }
.cells .mid { text-align: center; padding-left: 0; }
.cells .wrap { line-height: 11px; }
.cells .low { line-height: 14px; }
.cells .arial { font-size: 13px; line-height: 16px; }
.cells .arial em { font-size: 14px; line-height: 16px; }
.cells .end { display: flex; justify-content: flex-end; }
.heads { top: 119px; height: 22px; border-top: 1px solid #000; font: 12px/18px "Noto Sans CJK SC", sans-serif; text-align: center; }
.heads span { padding: 0; }
.frame { position: absolute; left: 20px; top: 0; width: 738px; height: 24px; border: 1px solid #000; border-top: 0; }
.bar { border-left: 1px solid #000; padding: 0 0 0 2px; font-size: 10px; line-height: 13px; }
.bold, .bold em { font-weight: bold; }
.qty { display: block; line-height: 18px; }
.qty em { line-height: 18px; }

/* data pane */
.datapane { width: 156px; flex: none; display: flex; flex-direction: column; }
.three { gap: 9px; padding-left: 14px; margin-top: 7px; }
.three .tab { padding: 0; }
.three .tab::before { left: -6px; } .three .tab::after { right: -6px; }
.tree { flex: 1; min-height: 0; border: 1px solid #999; border-right: 0; background: #fff; overflow: hidden; }
.root, .node { display: flex; gap: 6px; height: 16px; align-items: center; font-weight: bold; }
.root { padding-left: 4px; }
.root svg { height: 14px; }
.node { padding-left: 9px; gap: 5px; }
.open { width: 6px; height: 6px; margin-right: 3px; background: linear-gradient(135deg, transparent 50%, #333 50%); }
.tree ul { padding-left: 31px; background: repeating-linear-gradient(#888 0 1px, transparent 1px 3px) 31px 0 / 1px calc(100% - 8px) no-repeat; }
.tree .trunk { background: repeating-linear-gradient(#888 0 1px, transparent 1px 3px) 12px 0 / 1px 100% no-repeat, repeating-linear-gradient(#888 0 1px, transparent 1px 3px) 31px 0 / 1px calc(100% - 8px) no-repeat; }
.tree li { position: relative; height: 16px; padding-left: 32px; white-space: nowrap; background: repeating-linear-gradient(90deg, #888 0 1px, transparent 1px 3px) 0 8px / 11px 1px no-repeat; }
.tree li::before {
  content: ""; position: absolute; left: 15px; top: 1px; width: 12px; height: 13px; border: 1px solid #3b5fa5; border-right-color: #22355e; border-bottom-color: #22355e;
  background: linear-gradient(#5f8bd6, #5f8bd6) 0 0 / 100% 2px no-repeat,
    repeating-linear-gradient(#555 0 1px, transparent 1px 2px) 3px 4px / 4px 6px no-repeat, #e8f0fc;
}
.tree .marked::after { content: ""; position: absolute; z-index: 1; left: 3px; top: -4px; width: 121px; height: 105px; border: 5px solid #ed1c24; }
.options { flex: none; padding: 6px 0 0; }
.options label { display: flex; align-items: center; gap: 3px; height: 16px; }
.options input { box-shadow: inset 0 0 0 2px #e6e6e6; }
.options input:checked::before { content: ""; position: absolute; left: 3px; top: 0; width: 5px; height: 8px; border: solid #35549b; border-width: 0 2px 2px 0; transform: rotate(35deg); }

/* status bar */
.status { flex: none; height: 19px; display: flex; border-top: 1px solid #999; background: #f0eded; line-height: 19px; overflow: hidden; }
.status span { display: flex; }
.unit { position: relative; width: 72px; border-right: 1px solid #ddd; }
.orb { position: absolute; left: 10px; top: 13px; width: 28px; height: 28px; border-radius: 50%; border: 1px solid #456c93; background: #b5d0e8; }
.coord { gap: 1px; width: 108px; padding-left: 5px; align-items: flex-start; }
.coord svg { margin-top: 1px; }
.ext { width: 122px; gap: 4px; }
.name { border-left: 1px solid #ddd; padding-left: 3px; font-size: 11px; }
```
